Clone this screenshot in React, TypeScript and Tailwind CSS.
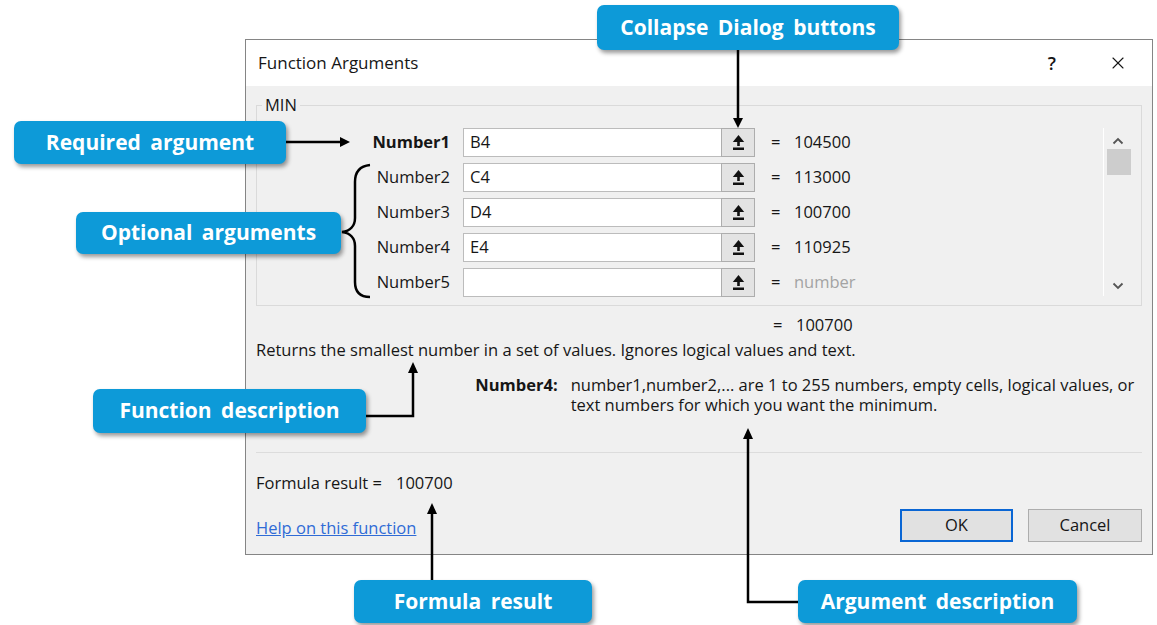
import { X } from 'lucide-react'

const rows = [
  { label: 'Number1', ref: 'B4', result: '104500', bold: true },
  { label: 'Number2', ref: 'C4', result: '113000' },
  { label: 'Number3', ref: 'D4', result: '100700' },
  { label: 'Number4', ref: 'E4', result: '110925' },
  { label: 'Number5', ref: '', result: 'number', muted: true },
]

function CollapseIcon() {
  return (
    <svg width="13" height="17" viewBox="0 0 13 17">
      <polygon points="6.5,1 0.8,8 12.2,8" fill="#111" />
      <rect x="5.2" y="7" width="2.6" height="5" fill="#111" />
      <rect x="1" y="13.5" width="11" height="2.5" fill="#111" />
    </svg>
  )
}

function Callout({ text, className }: { text: string; className: string }) {
  return (
    <div className={`absolute flex items-center justify-center rounded-[7px] bg-[#0d9ad8] text-white text-[21px] font-bold [word-spacing:4px] shadow-[2px_3px_4px_rgba(0,0,0,0.4)] ${className}`}>
      {text}
    </div>
  )
}

function ArgRow({ row }: { row: typeof rows[number] }) {
  return (
    <div className="flex items-center h-[29px]">
      <div className={`w-[194px] text-right pr-[1px] ${row.bold ? 'font-bold' : ''}`}>{row.label}</div>
      <div className="ml-[12px] w-[259px] h-full border border-[#bcbcbc] bg-white px-[6px] flex items-center">{row.ref}</div>
      <button className="-ml-px w-[34px] h-full border border-[#adadad] bg-[#e3e3e3] flex items-center justify-center">
        <CollapseIcon />
      </button>
      <span className="ml-[16px] w-[23px]">=</span>
      <span className={row.muted ? 'text-[#a3a3a3]' : ''}>{row.result}</span>
    </div>
  )
}

function Annotations() {
  return (
    <svg className="absolute inset-0 pointer-events-none" width="1157" height="625" viewBox="0 0 1157 625">
      <g stroke="#000" strokeWidth="2.5" fill="none">
        <line x1="738" y1="50" x2="738" y2="120" />
        <line x1="286" y1="142" x2="341" y2="142" />
        <path d="M370 165 C360 166 355 172 355 182 L355 218 C355 226 350 231 342 232 C350 233 355 238 355 246 L355 282 C355 292 360 297 370 297" />
        <polyline points="366,416 413,416 413,372" />
        <line x1="432" y1="580" x2="432" y2="513" />
        <polyline points="798,602 748,602 748,438" />
      </g>
      <g fill="#000">
        <polygon points="733,118 743,118 738,128" />
        <polygon points="340,137 340,147 350,142" />
        <polygon points="408,373 418,373 413,362" />
        <polygon points="427,514 437,514 432,503" />
        <polygon points="743,439 753,439 748,428" />
      </g>
    </svg>
  )
}

export default function App() {
  return (
    <div className="relative w-[1157px] h-[625px] bg-white overflow-hidden pt-[39px] pl-[245px] font-['Open_Sans','Noto_Sans',sans-serif] text-[16.5px] text-[#161616]">
      <div className="w-[908px] h-[516px] border border-[#858585] bg-[#f0f0f0] flex flex-col">
        <div className="h-[46px] bg-white flex items-center pl-[12px] pr-[24px] shrink-0">
          <span className="text-[17px]">Function Arguments</span>
          <span className="ml-auto mr-[52px] text-[18px] font-semibold">?</span>
          <X size={20} strokeWidth={1.3} />
        </div>

        <div className="flex-1 flex flex-col px-[10px]">
          <fieldset className="mt-[9px] border border-[#dadada] h-[211px] px-0">
            <legend className="ml-[5px] px-[3px] leading-[20px]">MIN</legend>
            <div className="flex mt-[13px]">
              <div className="flex-1 flex flex-col gap-[6px]">
                {rows.map(r => <ArgRow key={r.label} row={r} />)}
              </div>
              <div className="w-[28px] mr-[10px] h-[168px] border-l border-white flex flex-col items-center">
                <svg className="mt-[9px]" width="12" height="8" viewBox="0 0 12 8">
                  <polyline points="1.5,6.5 6,2 10.5,6.5" stroke="#555" strokeWidth="1.8" fill="none" />
                </svg>
                <div className="mt-[4px] ml-[2px] w-[24px] h-[26px] bg-[#cdcdcd]" />
                <svg className="mt-auto mb-[6px]" width="12" height="8" viewBox="0 0 12 8">
                  <polyline points="1.5,1.5 6,6 10.5,1.5" stroke="#555" strokeWidth="1.8" fill="none" />
                </svg>
              </div>
            </div>
          </fieldset>

          <div className="mt-[9px] h-[20px] flex items-center pl-[517px]">
            <span className="w-[23px]">=</span>
            <span>100700</span>
          </div>

          <p className="mt-[5px] leading-[20px]">Returns the smallest number in a set of values. Ignores logical values and text.</p>

          <div className="mt-[15px] flex leading-[20px]">
            <span className="w-[302px] text-right font-bold">Number4:</span>
            <span className="ml-[13px] w-[572px]">number1,number2,... are 1 to 255 numbers, empty cells, logical values, or text numbers for which you want the minimum.</span>
          </div>

          <div className="mt-[37px] border-t border-[#dcdcdc]" />

          <div className="mt-[20px] h-[20px] flex items-center">
            <span>Formula result =</span>
            <span className="ml-[14px]">100700</span>
          </div>

          <div className="mt-auto mb-[12px] flex items-end">
            <a href="#" className="mb-[4px] text-[#2f6bd6] underline leading-[20px]">Help on this function</a>
            <button className="ml-auto w-[113px] h-[33px] border-2 border-[#0a66d4] bg-[#e1e1e1]">OK</button>
            <button className="ml-[15px] w-[114px] h-[33px] border border-[#adadad] bg-[#e1e1e1]">Cancel</button>
          </div>
        </div>
      </div>

      <Annotations />
      <Callout text="Collapse Dialog buttons" className="left-[597px] top-[5px] w-[302px] h-[45px]" />
      <Callout text="Required argument" className="left-[14px] top-[121px] w-[272px] h-[43px]" />
      <Callout text="Optional arguments" className="left-[76px] top-[212px] w-[265px] h-[42px]" />
      <Callout text="Function description" className="left-[93px] top-[389px] w-[273px] h-[44px]" />
      <Callout text="Formula result" className="left-[354px] top-[580px] w-[238px] h-[43px]" />
      <Callout text="Argument description" className="left-[798px] top-[580px] w-[279px] h-[43px]" />
    </div>
  )
}
